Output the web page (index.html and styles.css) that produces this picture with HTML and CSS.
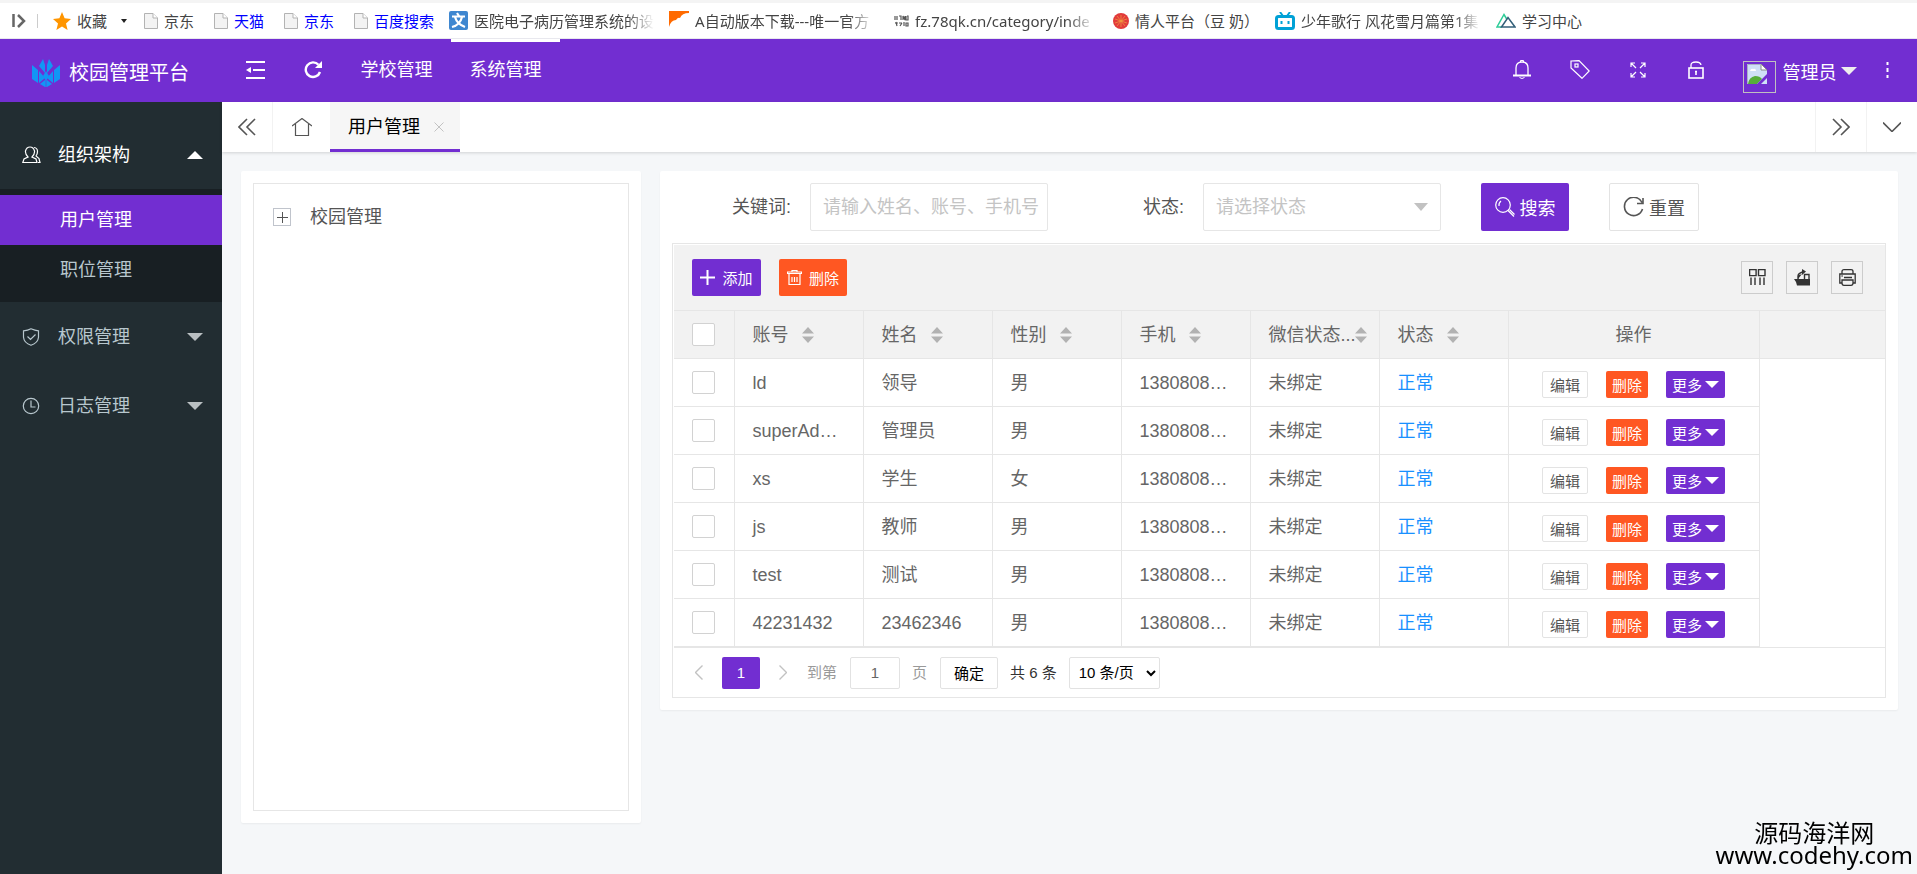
FILE: index.html
```
<!DOCTYPE html>
<html lang="zh-CN">
<head>
  <meta charset="UTF-8">
  <title>校园管理平台</title>
  <link rel="stylesheet" href="styles.css">
</head>
<body>
<svg class="sprite" aria-hidden="true">
  <symbol id="i-page" viewBox="0 0 14 17">
    <path d="M.5 1.5h8.5l4.500 4.500v10.500H.5z" fill="#f3f3f3" stroke="#b3b3b3"/>
    <path d="M9 1.500v4.500h4.500" fill="#fff" stroke="#b3b3b3"/>
  </symbol>
  <symbol id="i-sort" viewBox="0 0 12 16">
    <path d="M6 0l6 6.500H0zM6 16l6-6.500H0z" fill="#b2b2b2"/>
  </symbol>
</svg>

<nav class="bookmarks">
  <button class="bm-toggle" aria-label="展开"><svg width="14" height="14" viewBox="0 0 14 14"><path d="M1.500 0v13M6 1l6 6-6 6" fill="none" stroke="#666" stroke-width="2.500"/></svg></button>
  <a href="#" class="fav">
    <svg width="18" height="18" viewBox="0 0 18 18"><path d="M9 0l2.600 6.200L18 7l-5 4.400L14.600 18 9 14.500 3.400 18 5 11.400 0 7l6.400-.8z" fill="#ff9500"/></svg>
    <span>收藏</span><i class="mini-caret"></i>
  </a>
  <a href="#"><svg width="14" height="17"><use href="#i-page"/></svg><span>京东</span></a>
  <a href="#" class="blue"><svg width="14" height="17"><use href="#i-page"/></svg><span>天猫</span></a>
  <a href="#" class="blue"><svg width="14" height="17"><use href="#i-page"/></svg><span>京东</span></a>
  <a href="#" class="blue last-blue"><svg width="14" height="17"><use href="#i-page"/></svg><span>百度搜索</span></a>
  <a href="#" class="site">
    <svg width="19" height="19" viewBox="0 0 19 19"><rect width="19" height="19" rx="2" fill="#3f87d0"/><path d="M8 2l2 3M3 5.500h13M6 6q2 7 10 10M13 6q-2 8-10 10" fill="none" stroke="#fff" stroke-width="2.200"/></svg>
    <span class="long fade">医院电子病历管理系统的设</span>
  </a>
  <a href="#" class="site">
    <svg width="20" height="20" viewBox="0 0 20 20"><path d="M0 0h20v2q-7 0-9 5-2-1-4 2-5 0-7 7z" fill="#ff6a00"/></svg>
    <span class="long fade">A自动版本下载---唯一官方</span>
  </a>
  <a href="#" class="site wide-gap">
    <svg width="15" height="12" viewBox="0 0 15 12"><path d="M1 1v4M3 1v4M5 1h2v4M9 5V1l2 4V1M13 1h1v4h-2V1M1 8h3M2 7l1 4M5 8h3M6 11l2-3M10 7v4M12 8h2v3h-2z" fill="none" stroke="#555" stroke-width="1.200"/></svg>
    <span class="long fade">fz.78qk.cn/category/inde</span>
  </a>
  <a href="#" class="site red">
    <svg width="16" height="16" viewBox="0 0 16 16"><circle cx="8" cy="8" r="8" fill="#e23b3b"/><path d="M8 2v12M2 6l12 4M14 6L2 10M4 3l8 10M12 3L4 13" stroke="#f0a040" stroke-width=".7"/></svg>
    <span>情人平台（豆 奶）</span>
  </a>
  <a href="#" class="site bili">
    <svg width="20" height="18" viewBox="0 0 20 18"><path d="M5 0l3 4M15 0l-3 4" stroke="#00a1d6" stroke-width="2"/><rect x="1.500" y="4.500" width="17" height="12" rx="2" fill="#fff" stroke="#00a1d6" stroke-width="3"/><path d="M6.500 9v3M13.500 9v3" stroke="#00a1d6" stroke-width="2"/></svg>
    <span class="long fade">少年歌行 风花雪月篇第1集</span>
  </a>
  <a href="#" class="site">
    <svg width="20" height="15" viewBox="0 0 20 15"><path d="M6 14H1L8 1.500l3 5" fill="none" stroke="#2ecc98" stroke-width="1.500"/><path d="M5.500 14L12 4.500 19 14z" fill="none" stroke="#34607a" stroke-width="1.500"/></svg>
    <span>学习中心</span>
  </a>
</nav>

<header class="header">
  <a href="#" class="logo">
    <svg width="28" height="28" viewBox="0 0 28 28" fill="#1296f5"><path d="M0 6l6 5v13l-6-4zM28 6l-6 5v13l6-4zM11 0l2 6v8L7 7zM17 0l-2 6v8l6-7zM7 12l6 7-6 5zM21 12l-6 7 6 5zM8 25l5-4v7zM20 25l-5-4v7z"/><path d="M14 12l3 5-3 5-3-5zM13.300 20h1.400v8h-1.400z"/></svg>
    <span>校园管理平台</span>
  </a>
  <button class="head-btn" aria-label="收起菜单"><svg width="19" height="18" viewBox="0 0 19 18"><path d="M0 1h19M7 9h12M0 17h19" stroke="#fff" stroke-width="2"/><path d="M0 9l5-3v6z" fill="#fff"/></svg></button>
  <button class="head-btn" aria-label="刷新"><svg width="18" height="18" viewBox="0 0 18 18"><path d="M14.500 3.800A7.300 7.300 0 1 0 16 11" fill="none" stroke="#fff" stroke-width="2.400"/><path d="M18 0v7h-7z" fill="#fff"/></svg></button>
  <nav class="top-nav">
    <a href="#">学校管理</a>
    <a href="#" class="active">系统管理</a>
  </nav>
  <div class="head-right">
    <button aria-label="通知"><svg width="18" height="19" viewBox="0 0 18 19" fill="none" stroke="#fff"><path d="M3 15V8q0-6 6-6t6 6v7" stroke-width="1.300"/><path d="M0 15.500h18" stroke-width="2"/><path d="M7.500 2V.5h3V2M6.500 17.500l2.500 1 2.500-1"/></svg></button>
    <button aria-label="标签"><svg width="20" height="19" viewBox="0 0 20 19" fill="none" stroke="#fff" stroke-width="1.200"><path d="M1 1l8-.4L19.200 11 12 18.300 1 8z"/><rect x="5" y="4" width="3" height="3"/></svg></button>
    <button aria-label="全屏"><svg width="16" height="16" viewBox="0 0 16 16" fill="none" stroke="#fff" stroke-width="1.200"><path d="M1 5V1h4M1 1l5 5M11 1h4v4M15 1l-5 5M1 11v4h4M1 15l5-5M15 11v4h-4M15 15l-5-5"/></svg></button>
    <button aria-label="锁屏"><svg width="16" height="18" viewBox="0 0 16 18" fill="none" stroke="#fff"><path d="M3 7V4q0-3 5-3 4.500 0 5 3" stroke-width="1.300"/><rect x="1" y="7" width="14" height="10" stroke-width="1.600"/><path d="M8 10v4M7 10.500h2" stroke-width="1.600"/></svg></button>
    <button class="user">
      <span class="avatar"><svg width="20" height="21" viewBox="0 0 20 21"><path d="M0 0h14l6 6v14H0z" fill="#cfe0f7"/><path d="M14 0v6h6z" fill="#fff" stroke="#8a8a8a"/><path d="M.5 20V.5H14" fill="none" stroke="#aab4c4"/><path d="M3 7q1-3 3-2 3-1 3 2z" fill="#fff"/><path d="M1 20q1-7 7-8 5 0 7 3l-5 5z" fill="#56ad3a"/><path d="M9 21L20 10v4l-7 7z" fill="#722ed1"/></svg></span>
      管理员<i class="caret"></i>
    </button>
    <button class="more" aria-label="更多"><svg width="3" height="16" viewBox="0 0 3 16"><path d="M1.500 0v3M1.500 6v4M1.500 13v3" stroke="#fff" stroke-width="2"/></svg></button>
  </div>
</header>

<div class="layout">
  <aside class="side">
    <a href="#" class="menu open">
      <svg width="19" height="18" viewBox="0 0 19 18"><path d="M6 11Q3 8 3.500 5 4.500 1 8 1t4.500 4q.5 3-2.500 6l4 2 1 3.500H.8L2 13zM12 1.500q3.500.5 3.500 4 0 2.500-1.500 4.500l3 2.500 1 4h-2"/></svg>
      组织架构<i class="caret up"></i>
    </a>
    <div class="submenu">
      <a href="#" class="active">用户管理</a>
      <a href="#">职位管理</a>
    </div>
    <a href="#" class="menu">
      <svg width="19" height="18" viewBox="0 0 19 18"><path d="M9 .8q4 1.700 7.500 2v6.500Q16 15 9 17.300 2 15 1.500 9.300V2.800Q6 2.500 9 .8zM5.500 8.500l3 3 5-5"/></svg>
      权限管理<i class="caret"></i>
    </a>
    <a href="#" class="menu">
      <svg width="19" height="18" viewBox="0 0 19 18"><circle cx="9" cy="9" r="7.700"/><path d="M9 3.500V10h4.500"/></svg>
      日志管理<i class="caret"></i>
    </a>
  </aside>

  <div class="body">
    <div class="tabs">
      <button class="tab-ctl left" aria-label="向左"><svg width="18" height="18" viewBox="0 0 18 18"><path d="M9 1L1 9l8 8M17 1L9 9l8 8"/></svg></button>
      <a href="#" class="tab home" aria-label="首页"><svg width="20" height="18" viewBox="0 0 20 18"><path d="M0 8l10-7.500L20 8M3.500 6v11.500h13V6"/></svg></a>
      <a href="#" class="tab current">用户管理<svg class="close" width="10" height="10" viewBox="0 0 10 10"><path d="M.5.5l9 9M9.500.5l-9 9"/></svg></a>
      <button class="tab-ctl right first" aria-label="向右"><svg width="18" height="18" viewBox="0 0 18 18"><path d="M1 1l8 8-8 8M9 1l8 8-8 8"/></svg></button>
      <button class="tab-ctl right" aria-label="展开标签"><svg width="18" height="10" viewBox="0 0 18 10"><path d="M0 .5l9 9 9-9"/></svg></button>
    </div>

    <main class="content">
      <section class="card tree-card">
        <div class="tree">
          <button class="expand" aria-label="展开节点"><svg width="11" height="11" viewBox="0 0 11 11"><path d="M5.500 0v11M0 5.500h11" stroke="#555"/></svg></button>
          <span>校园管理</span>
        </div>
      </section>

      <section class="card list-card">
        <form class="search" onsubmit="return false">
          <label for="keyword" class="w-key">关键词:</label>
          <input id="keyword" type="text" placeholder="请输入姓名、账号、手机号">
          <label for="state" class="w-state">状态:</label>
          <div class="select">
            <select id="state"><option>请选择状态</option></select>
          </div>
          <button class="btn primary"><svg width="20" height="20" viewBox="0 0 20 20" fill="none" stroke="#fff"><circle cx="8" cy="8" r="7.300" stroke-width="1.200"/><path d="M4 9q-.5-3 2-5M13 13.500l6 6M14.500 12.500l5 5" stroke-width="1.200"/></svg>搜索</button>
          <button type="reset" class="btn plain"><svg width="21" height="20" viewBox="0 0 21 20" fill="none" stroke="#555" stroke-width="1.600"><path d="M19 5.500A9.200 9.200 0 1 0 19.500 12M20 1v5.500h-6"/></svg>重置</button>
        </form>

        <div class="grid">
          <div class="toolbar">
            <button class="btn-sm primary"><svg width="15" height="15" viewBox="0 0 15 15"><path d="M7.500 0v15M0 7.500h15" stroke="#fff" stroke-width="2"/></svg>添加</button>
            <button class="btn-sm danger"><svg width="15" height="15" viewBox="0 0 15 15" fill="none" stroke="#fff"><path d="M.5 3.500V2H14.500v1.500zM5 1.500V.5h5v1M2 4v10.500h11V4M5 7v5M7.500 7v5M10 7v5" stroke-width="1.200"/></svg>删除</button>
            <div class="tools">
              <button aria-label="筛选列"><svg width="17" height="17" viewBox="0 0 17 17" fill="none" stroke="#333"><path d="M.6.6h6.500v6H.6zM9.500.6H16v6H9.500zM2 8.500V16M6 8.500V16M11 8.500V16M15 8.500V16" stroke-width="1.400"/></svg></button>
              <button aria-label="导出"><svg width="17" height="17" viewBox="0 0 17 17"><path d="M0 10h16v6.500H3L2 13zM4 10V6.500l4-1.500" fill="#333"/><path d="M4 10V7q0-2.500 4.500-4M10.500 10V5.500H15V10" fill="none" stroke="#333" stroke-width="1.400"/><path d="M8 0l4 2.500L8 6z" fill="#333"/></svg></button>
              <button aria-label="打印"><svg width="17" height="17" viewBox="0 0 17 17" fill="none" stroke="#333" stroke-width="1.300"><path d="M3 5V2.500Q3 .7 5 .7h7q2 0 2 1.800V5M3 14H.8V5h15.400v9H14M3 11h11v3q0 2.300-2 2.300H5Q3 16.300 3 14zM2.500 7h1.200M5 8.500h8"/></svg></button>
            </div>
          </div>
          <table>
            <colgroup>
              <col class="c-check"><col class="c-data"><col class="c-data"><col class="c-data"><col class="c-data"><col class="c-data"><col class="c-data"><col class="c-ops"><col>
            </colgroup>
            <thead>
              <tr>
                <th><input type="checkbox" aria-label="全选"></th>
                <th>账号<svg class="sort" width="12" height="16"><use href="#i-sort"/></svg></th>
                <th>姓名<svg class="sort" width="12" height="16"><use href="#i-sort"/></svg></th>
                <th>性别<svg class="sort" width="12" height="16"><use href="#i-sort"/></svg></th>
                <th>手机<svg class="sort" width="12" height="16"><use href="#i-sort"/></svg></th>
                <th>微信状态...<svg class="sort tight" width="12" height="16"><use href="#i-sort"/></svg></th>
                <th>状态<svg class="sort" width="12" height="16"><use href="#i-sort"/></svg></th>
                <th class="ops">操作</th>
                <th></th>
              </tr>
            </thead>
            <tbody id="rows"></tbody>
          </table>
          <div class="pager">
            <button class="arrow" aria-label="上一页"><svg width="8" height="15" viewBox="0 0 8 15"><path d="M7.500.5l-7 7 7 7"/></svg></button>
            <button class="page">1</button>
            <button class="arrow next" aria-label="下一页"><svg width="8" height="15" viewBox="0 0 8 15"><path d="M.5.5l7 7-7 7"/></svg></button>
            <label for="goto">到第</label>
            <input id="goto" type="text" value="1">
            <span class="unit">页</span>
            <button class="ok">确定</button>
            <span class="total">共 6 条</span>
            <select aria-label="每页条数"><option>10 条/页</option></select>
          </div>
        </div>
      </section>
    </main>
  </div>
</div>

<div class="watermark"><span>源码海洋网</span><span class="url">www.codehy.com</span></div>

<script>
  const users = [
    ['ld', '领导', '男'],
    ['superAd…', '管理员', '男'],
    ['xs', '学生', '女'],
    ['js', '教师', '男'],
    ['test', '测试', '男'],
    ['42231432', '23462346', '男']
  ];

  document.getElementById('rows').innerHTML = users.map(([account, name, sex]) => `
    <tr>
      <td><input type="checkbox" aria-label="选择 ${account}"></td>
      <td>${account}</td>
      <td>${name}</td>
      <td>${sex}</td>
      <td>1380808…</td>
      <td>未绑定</td>
      <td class="ok-state">正常</td>
      <td class="ops"><div>
        <button class="btn-xs plain">编辑</button>
        <button class="btn-xs danger">删除</button>
        <button class="btn-xs primary">更多<i class="caret"></i></button>
      </div></td>
      <td></td>
    </tr>`).join('');
</script>
</body>
</html>
```
FILE: styles.css
```
* {
  box-sizing: border-box;
}
html, body {
  margin: 0;
  height: 100%;
}
body {
  display: flex;
  flex-direction: column;
  overflow: hidden;
  background: #f5f7f9;
  color: #555;
  font-family: "Liberation Sans", "Noto Sans CJK SC", sans-serif;
  font-size: 18px;
  line-height: 24px;
}
a {
  color: inherit;
  text-decoration: none;
}
button, input, select {
  font-family: inherit;
  font-size: 15px;
  color: inherit;
  margin: 0;
}
button {
  display: flex;
  align-items: center;
  justify-content: center;
  padding: 0;
  border: none;
  background: none;
  cursor: pointer;
  white-space: nowrap;
}
svg {
  flex: none;
  display: block;
}
.sprite {
  position: absolute;
  width: 0;
  height: 0;
}
.caret {
  border: 8px solid transparent;
  border-top-color: #eee;
  border-bottom: none;
}
.primary {
  background: #722ed1;
  color: #fff;
}
.danger {
  background: #ff5722;
  color: #fff;
}
.plain {
  background: #fff;
  border: 1px solid #e3e3e3;
  color: #555;
}

/* bookmarks bar */
.bookmarks {
  flex: none;
  display: flex;
  align-items: center;
  height: 39px;
  padding: 0 12px;
  background: #fff;
  border-top: 3px solid #f4f4f4;
  border-bottom: 1px solid #e8e8ee;
  font-family: "Noto Sans", "Noto Sans CJK SC", sans-serif;
  font-size: 15px;
  color: #444;
  white-space: nowrap;
}
.bookmarks a {
  display: flex;
  align-items: center;
  gap: 6px;
  margin-right: 20px;
}
.bookmarks .bm-toggle {
  padding-right: 11px;
  margin-right: 15px;
  border-right: 1px solid #ccc;
}
.bookmarks .fav {
  margin-right: 17px;
}
.mini-caret {
  margin-left: 8px;
  border: 3px solid transparent;
  border-top: 4px solid #222;
  border-bottom: none;
}
.bookmarks .blue {
  color: #00f;
}
.bookmarks .last-blue, .bookmarks .site {
  margin-right: 15px;
}
.bookmarks .wide-gap {
  margin: 0 18px 0 4px;
}
.bookmarks .red {
  margin-right: 16px;
}
.long {
  width: 180px;
  overflow: hidden;
}
.fade {
  -webkit-mask-image: linear-gradient(to right, #000 85%, transparent);
  mask-image: linear-gradient(to right, #000 85%, transparent);
}

/* header */
.header {
  flex: none;
  display: flex;
  height: 63px;
  background: #722ed1;
  color: #fff;
  white-space: nowrap;
}
.logo {
  display: flex;
  align-items: center;
  gap: 9px;
  width: 226px;
  padding: 5px 0 0 32px;
  font-size: 20px;
}
.head-btn {
  width: 58px;
  padding-bottom: 2px;
}
.top-nav {
  display: flex;
}
.top-nav a {
  width: 109px;
  padding-top: 16px;
  text-align: center;
  border-top: 3px solid transparent;
}
.top-nav a.active {
  border-color: #fff;
}
.head-right {
  display: flex;
  margin-left: auto;
}
.head-right button {
  width: 58px;
  padding-bottom: 2px;
}
.head-right .user {
  width: 149px;
  padding: 0;
  font-size: 18px;
}
.avatar {
  width: 33px;
  height: 32px;
  margin: 12px 7px 0 0;
  padding: 2px 3px;
  border: 1px solid #c0c0c0;
}
.user .caret {
  margin-left: 4px;
}
.head-right .more {
  width: 43px;
  padding-right: 16px;
}

/* layout */
.layout {
  flex: 1;
  display: flex;
  min-height: 0;
}
.side {
  flex: none;
  width: 222px;
  padding-top: 18px;
  background: #222d32;
  color: #b8c7ce;
}
.menu {
  display: flex;
  align-items: center;
  height: 69px;
  padding: 0 19px 0 22px;
}
.menu svg {
  margin-right: 17px;
  fill: none;
  stroke: currentColor;
  stroke-width: 1.2;
}
.menu .caret {
  margin-left: auto;
  border-top-color: #b9bfc2;
}
.menu.open {
  color: #fff;
}
.menu .caret.up {
  border: 8px solid transparent;
  border-top: none;
  border-bottom-color: #fff;
}
.submenu {
  padding: 6px 0 7px;
  background: #181f23;
}
.submenu a {
  display: block;
  padding-left: 60px;
  line-height: 50px;
}
.submenu .active {
  background: #722ed1;
  color: #fff;
}

.body {
  flex: 1;
  min-width: 0;
  display: flex;
  flex-direction: column;
}
.tabs {
  flex: none;
  display: flex;
  height: 50px;
  background: #fff;
  box-shadow: 0 1px 3px rgba(0, 0, 0, 0.15);
}
.tabs svg {
  fill: none;
  stroke: #555;
  stroke-width: 1.6;
}
.tab-ctl {
  width: 51px;
  border-left: 1px solid #f2f2f2;
}
.tab-ctl.left {
  border-left: none;
  border-right: 1px solid #f2f2f2;
}
.tab-ctl.first {
  margin-left: auto;
}
.tab {
  display: flex;
  align-items: center;
  justify-content: center;
}
.tab.home {
  width: 57px;
}
.tab.current {
  width: 130px;
  padding: 3px 0 0 2px;
  background: #f6f6f6;
  border-bottom: 3px solid #722ed1;
  color: #000;
}
.tabs .home svg {
  stroke-width: 1.2;
}
.tabs .close {
  margin-left: 14px;
  stroke: #c2c2c2;
  stroke-width: 1;
}

.content {
  flex: 1;
  display: flex;
  align-items: flex-start;
  gap: 19px;
  padding: 19px;
}
.card {
  background: #fff;
  border-radius: 2px;
  box-shadow: 0 1px 2px rgba(0, 0, 0, 0.05);
  padding: 12px;
}
.tree-card {
  flex: none;
  width: 400px;
}
.tree {
  display: flex;
  align-items: flex-start;
  gap: 19px;
  height: 628px;
  padding: 21px 19px;
  border: 1px solid #e6e6e6;
}
.expand {
  width: 18px;
  height: 18px;
  margin-top: 3px;
  border: 1px solid #c0c4cc;
}
.list-card {
  flex: 1;
  min-width: 0;
}

/* search form */
.search {
  display: flex;
  align-items: center;
  margin-bottom: 12px;
}
.search label {
  padding-right: 19px;
  text-align: right;
}
.w-key {
  width: 138px;
}
.w-state {
  width: 155px;
}
.search input, .search select {
  width: 238px;
  height: 48px;
  padding: 0 4px 0 12px;
  border: 1px solid #e6e6e6;
  border-radius: 2px;
  background: #fff;
  font-size: 18px;
  color: #c4c4c4;
}
.search input::placeholder {
  color: #c4c4c4;
}
.select {
  position: relative;
}
.search select {
  display: block;
  appearance: none;
}
.select::after {
  content: "";
  position: absolute;
  right: 13px;
  top: 20px;
  border: 7px solid transparent;
  border-top: 8px solid #c2c2c2;
  border-bottom: none;
  pointer-events: none;
}
.btn {
  gap: 5px;
  width: 88px;
  height: 48px;
  margin-left: 40px;
  border-radius: 2px;
  font-size: 18px;
}
.btn.plain {
  width: 90px;
}

/* data grid */
.grid {
  padding: 1px 0 0 1px;
  border: 1px solid #e6e6e6;
}
.toolbar {
  display: flex;
  align-items: center;
  gap: 18px;
  height: 65px;
  padding: 0 22px 0 18px;
  background: #f2f2f2;
}
.btn-sm {
  gap: 7px;
  width: 69px;
  height: 37px;
  border-radius: 2px;
}
.btn-sm.danger {
  width: 68px;
}
.tools {
  display: flex;
  gap: 13px;
  margin-left: auto;
}
.tools button {
  width: 32px;
  height: 33px;
  border: 1px solid #ccc;
}
table {
  width: 100%;
  table-layout: fixed;
  border-collapse: collapse;
  color: #666;
}
.c-check {
  width: 60px;
}
.c-data {
  width: 129px;
}
.c-ops {
  width: 251px;
}
th, td {
  height: 48px;
  padding: 0 0 0 18px;
  border: 1px solid #e6e6e6;
  border-left: none;
  text-align: left;
  font-weight: normal;
  white-space: nowrap;
}
th {
  background: #f2f2f2;
}
th:last-child {
  border-right: none;
}
td:last-child {
  border: none;
}
table input {
  appearance: none;
  display: block;
  width: 23px;
  height: 23px;
  background: #fff;
  border: 1px solid #d2d2d2;
  border-radius: 2px;
}
.sort {
  display: inline-block;
  vertical-align: -2px;
  margin-left: 13px;
}
.sort.tight {
  margin-left: -1px;
}
.ok-state {
  color: #1890ff;
}
.ops {
  padding: 0;
  text-align: center;
}
.ops div {
  display: flex;
  justify-content: center;
  gap: 18px;
  padding-top: 4px;
}
.btn-xs {
  height: 27px;
  padding: 0 6px;
  border-radius: 2px;
}
.btn-xs.plain {
  padding: 0 7px;
}
.btn-xs .caret {
  border-width: 7px;
  border-bottom: none;
  border-top-color: #fff;
  margin-left: 3px;
}

/* pager */
.pager {
  display: flex;
  align-items: center;
  height: 50px;
  padding-left: 21px;
  border-top: 1px solid #e6e6e6;
  font-size: 15px;
  color: #999;
}
.pager svg {
  fill: none;
  stroke: #c2c2c2;
  stroke-width: 1.4;
}
.pager .page {
  width: 38px;
  height: 32px;
  margin: 0 19px;
  background: #722ed1;
  border-radius: 2px;
  color: #fff;
}
.pager label {
  margin: 0 13px 0 20px;
}
.pager input, .pager .ok, .pager select {
  height: 32px;
  border: 1px solid #e2e2e2;
  border-radius: 2px;
  background: #fff;
}
.pager input {
  width: 50px;
  text-align: center;
  color: #666;
}
.unit {
  margin: 0 13px 0 12px;
}
.pager .ok {
  width: 58px;
  color: #000;
}
.total {
  margin: 0 12px;
  color: #333;
}
.pager select {
  width: 91px;
  padding: 0 5px;
  color: #000;
}

.watermark {
  position: fixed;
  right: 4px;
  bottom: 8px;
  display: flex;
  flex-direction: column;
  align-items: center;
  color: #000;
  font-family: "Noto Sans", "Noto Sans CJK SC", sans-serif;
  font-size: 24px;
  line-height: 22px;
}
```
